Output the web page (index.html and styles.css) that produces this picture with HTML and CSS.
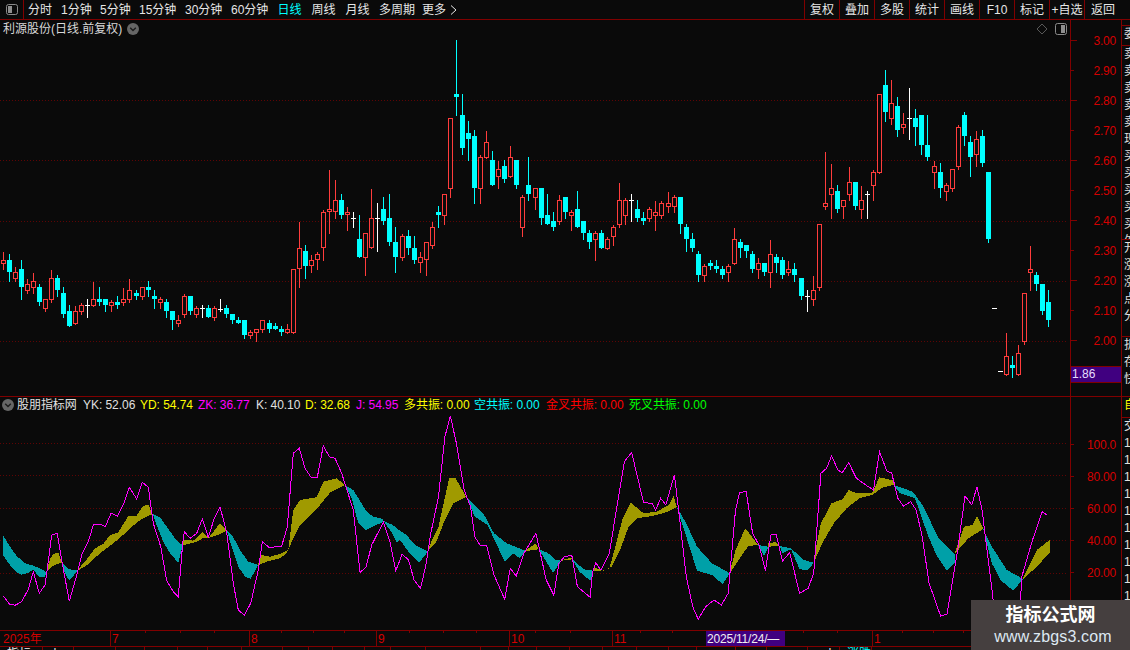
FILE: index.html
```html
<!DOCTYPE html>
<html lang="zh-CN">
<head>
<meta charset="utf-8">
<title>利源股份 日线</title>
<link rel="stylesheet" href="styles.css">
</head>
<body>
<div class="app">
  <header class="toolbar">
    <div class="toggle">
      <svg class="icon-toggle" width="12" height="11" viewBox="0 0 12 11"><rect x="0.5" y="0.5" width="11" height="10" rx="2" class="tg-frame"/><rect x="2" y="2" width="4" height="7" class="tg-bar"/></svg>
    </div>
    <nav class="periods">
      <span class="p w24">分时</span>
      <span class="p w30">1分钟</span>
      <span class="p w30">5分钟</span>
      <span class="p w37">15分钟</span>
      <span class="p w37">30分钟</span>
      <span class="p w37">60分钟</span>
      <span class="p w25 active">日线</span>
      <span class="p w25">周线</span>
      <span class="p w25">月线</span>
      <span class="p w36">多周期</span>
      <span class="p more">更多<svg class="more-arrow" width="7" height="10" viewBox="0 0 7 10"><polyline points="1,0.5 6,5 1,9.5"/></svg></span>
    </nav>
    <nav class="actions">
      <span class="b">复权</span>
      <span class="b">叠加</span>
      <span class="b">多股</span>
      <span class="b">统计</span>
      <span class="b">画线</span>
      <span class="b">F10</span>
      <span class="b">标记</span>
      <span class="b">+自选</span>
      <span class="b last">返回</span>
    </nav>
  </header>

  <div class="workspace">
    <main class="charts">
      <section class="pane price-pane">
        <div class="plot">
          <svg id="price" class="chart" width="1070" height="376" viewBox="0 20 1070 376">
            <line class="grid" x1="0" x2="1067" y1="100.5" y2="100.5"/>
            <line class="grid" x1="0" x2="1067" y1="160.5" y2="160.5"/>
            <line class="grid" x1="0" x2="1067" y1="221.5" y2="221.5"/>
            <line class="grid" x1="0" x2="1067" y1="281.5" y2="281.5"/>
            <line class="grid" x1="0" x2="1067" y1="341.5" y2="341.5"/>
          </svg>
          <div class="plot-head">
            <span class="stock">利源股份(日线.前复权)</span>
            <svg class="chev" width="12" height="12" viewBox="0 0 12 12"><circle cx="6" cy="6" r="6" class="chev-bg"/><polyline points="3.2,4.8 6,7.6 8.8,4.8" class="chev-line"/></svg>
            <span class="head-right">
              <svg width="12" height="12" viewBox="0 0 12 12"><polygon points="6,1 11,6 6,11 1,6" class="diamond"/></svg>
              <svg width="13" height="12" viewBox="0 0 13 12"><rect x="0.5" y="0.5" width="11" height="11" rx="2" class="tg-frame"/><rect x="6" y="2" width="4" height="8" class="tg-bar"/></svg>
            </span>
          </div>
        </div>
        <div class="axis price-axis">
          <div class="row"><i class="tk long"></i><span>3.00</span></div>
          <div class="row"><i class="tk"></i><span>2.90</span></div>
          <div class="row"><i class="tk long"></i><span>2.80</span></div>
          <div class="row"><i class="tk"></i><span>2.70</span></div>
          <div class="row"><i class="tk long"></i><span>2.60</span></div>
          <div class="row"><i class="tk"></i><span>2.50</span></div>
          <div class="row"><i class="tk long"></i><span>2.40</span></div>
          <div class="row"><i class="tk"></i><span>2.30</span></div>
          <div class="row"><i class="tk long"></i><span>2.20</span></div>
          <div class="row"><i class="tk"></i><span>2.10</span></div>
          <div class="row"><i class="tk long"></i><span>2.00</span></div>
          <div class="last-price">1.86</div>
        </div>
      </section>

      <section class="pane ind-pane">
        <div class="plot">
          <svg id="ind" class="chart" width="1070" height="233" viewBox="0 397 1070 233">
            <line class="grid" x1="0" x2="1067" y1="443.5" y2="443.5"/>
            <line class="grid" x1="0" x2="1067" y1="475.5" y2="475.5"/>
            <line class="grid" x1="0" x2="1067" y1="508.5" y2="508.5"/>
            <line class="grid" x1="0" x2="1067" y1="540.5" y2="540.5"/>
            <line class="grid" x1="0" x2="1067" y1="573.5" y2="573.5"/>
          </svg>
          <div class="ind-head">
            <svg class="chev2" width="12" height="12" viewBox="0 0 12 12"><circle cx="6" cy="6" r="6" class="chev-bg"/><polyline points="3.2,4.8 6,7.6 8.8,4.8" class="chev-line"/></svg>
            <span class="v w66 white">股朋指标网</span>
            <span class="v w57 white">YK: 52.06</span>
            <span class="v w58 yellow">YD: 54.74</span>
            <span class="v w58 magenta">ZK: 36.77</span>
            <span class="v w49 white">K: 40.10</span>
            <span class="v w51 yellow">D: 32.68</span>
            <span class="v w48 magenta">J: 54.95</span>
            <span class="v w70 yellow">多共振: 0.00</span>
            <span class="v w72 cyan">空共振: 0.00</span>
            <span class="v w83 red">金叉共振: 0.00</span>
            <span class="v w80 green">死叉共振: 0.00</span>
          </div>
        </div>
        <div class="axis ind-axis">
          <div class="row2"><i class="tk"></i><span>100.0</span></div>
          <div class="row2"><i class="tk"></i><span>80.00</span></div>
          <div class="row2"><i class="tk"></i><span>60.00</span></div>
          <div class="row2"><i class="tk"></i><span>40.00</span></div>
          <div class="row2"><i class="tk"></i><span>20.00</span></div>
        </div>
      </section>

      <svg class="date-axis" width="1121" height="19" viewBox="0 631 1121 19">
        <path class="dline" d="M110.5 631v15M249.5 631v15M376.5 631v15M509.5 631v15M612.5 631v15M872.5 631v15M145.5 631v2M180.5 631v2M214.5 631v2M281.5 631v2M313.5 631v2M344.5 631v2M409.5 631v2M443.5 631v2M476.5 631v2M535.5 631v2M570.5 631v2M640.5 631v2M672.5 631v2M803.5 631v2M837.5 631v2M902.5 631v2M933.5 631v2M963.5 631v2M0 646.5H1121M42.5 647v3M73.5 647v3M115.5 647v3M144.5 647v3M177.5 647v3M207.5 647v3M241.5 647v3M282.5 647v3M308.5 647v3M332.5 647v3M364.5 647v3M390.5 647v3M425.5 647v3M480.5 647v3M508.5 647v3M536.5 647v3M569.5 647v3M602.5 647v3M636.5 647v3M668.5 647v3M696.5 647v3M735.5 647v3M766.5 647v3M807.5 647v3M839.5 647v3M871.5 647v3"/>
        <rect class="dmark" x="706" y="631" width="79" height="15"/>
        <text class="dtxt" x="3" y="643">2025年</text>
        <text class="dtxt" x="112" y="643">7</text>
        <text class="dtxt" x="251" y="643">8</text>
        <text class="dtxt" x="378" y="643">9</text>
        <text class="dtxt" x="511" y="643">10</text>
        <text class="dtxt" x="614" y="643">11</text>
        <text class="dtxt" x="874" y="643">1</text>
        <text class="dmark-txt" x="707" y="643">2025/11/24/—</text>
        <text class="tab-w" x="7" y="658">指标</text>
        <text class="tab-w" x="50" y="658">卜</text>
        <text class="tab-w" x="825" y="658">卜</text>
        <text class="tab-c" x="847" y="658">涨跌</text>
      </svg>
    </main>

    <aside class="side">
      <div class="cell c0"></div>
      <div class="cell c1"><span>委</span></div>
      <div class="cell c2"><span>卖卖卖卖卖现买买买买买外</span></div>
      <div class="cell c3"><span>开涨涨点分</span></div>
      <div class="cell c4"><span>折存快</span></div>
      <div class="cell c5 yellow"><span>自</span></div>
      <div class="cell c6"><span>交1111111111</span></div>
    </aside>
  </div>

  <div class="watermark">
    <div class="wm-title">指标公式网</div>
    <div class="wm-url">www.zbgs3.com</div>
  </div>
</div>
<script src="chart.js"></script>
</body>
</html>
```

FILE: styles.css
```css
* { box-sizing: border-box; }
html, body { margin: 0; padding: 0; background: #0a0a0a; }
body { font-family: "Liberation Sans", "Noto Sans CJK SC", sans-serif; font-size: 12px; color: #e6e6e6; }
.app { position: relative; width: 1130px; height: 650px; overflow: hidden; background: #0a0a0a; display: flex; flex-direction: column; }

.toolbar { flex: none; height: 20px; display: flex; align-items: stretch; border-bottom: 1px solid #800000; }
.toggle { width: 24px; border-right: 1px solid #800000; display: flex; align-items: center; justify-content: center; }
.icon-toggle { display: block; }
.periods { display: flex; gap: 9px; padding-left: 4px; height: 19px; }
.p { height: 19px; padding-top: 1px; line-height: 18px; text-align: center; white-space: nowrap; color: #e6e6e6; }
.p.active { color: #00ffff; }
.w24 { width: 24px; } .w25 { width: 25px; } .w30 { width: 30px; } .w36 { width: 36px; } .w37 { width: 37px; }
.more { display: flex; align-items: center; gap: 4px; margin-left: -2px; }
.more-arrow { flex: none; }
.more-arrow polyline { fill: none; stroke: #e6e6e6; stroke-width: 1; }
.actions { margin-left: auto; display: flex; padding-right: 9px; height: 19px; }
.b { width: 35px; height: 19px; padding-top: 1px; line-height: 18px; border-left: 1px solid #800000; text-align: center; white-space: nowrap; }
.b.last { width: 37px; }

.workspace { flex: none; height: 630px; display: flex; }
.charts { width: 1121px; display: flex; flex-direction: column; }
.pane { flex: none; display: flex; border-bottom: 1px solid #800000; }
.price-pane { height: 377px; }
.ind-pane { height: 234px; }
.plot { position: relative; width: 1070px; }
.chart { display: block; shape-rendering: crispEdges; }
.grid { stroke: #5e0404; stroke-width: 1; stroke-dasharray: 1 2; }

.plot-head { position: absolute; top: 0; left: 0; right: 0; height: 18px; display: flex; align-items: center; padding: 0 2px 0 3px; color: #d8d8d8; }
.stock { line-height: 18px; }
.chev { margin-left: 5px; }
.chev-bg { fill: #666; }
.chev-line { fill: none; stroke: #1c1c1c; stroke-width: 1.4; }
.head-right { margin-left: auto; display: flex; gap: 7px; align-items: center; }
.diamond { fill: none; stroke: #585858; }
.tg-frame { fill: #0a0a0a; stroke: #8a8a8a; }
.tg-bar { fill: #8f8f8f; }

.axis { position: relative; flex: 1; border-left: 1px solid #800000; color: #d40000; }
.price-axis { padding-top: 5px; }
.row { height: 30.08px; display: flex; align-items: center; }
.tk { display: block; width: 3px; height: 1px; background: #800000; flex: none; }
.tk.long { width: 6px; }
.row span, .row2 span { margin-left: auto; padding: 1px 5px 0 0; letter-spacing: -0.2px; }
.ind-axis { padding-top: 31px; }
.row2 { height: 32.2px; display: flex; align-items: center; }
.last-price { position: absolute; left: 0; right: 0; top: 346px; height: 17px; line-height: 15px; padding-left: 1px; background: #400080; border-top: 1px solid #800000; border-bottom: 1px solid #800000; color: #e4dcff; }

.ind-head { position: absolute; left: 0; top: 0; height: 16px; display: flex; align-items: center; padding-left: 2px; white-space: nowrap; }
.chev2 { margin-right: 3px; flex: none; }
.v { flex: none; line-height: 16px; font-size: 12px; letter-spacing: -0.05px; }
.w66 { width: 66px; } .w57 { width: 57px; } .w58 { width: 58px; } .w49 { width: 49px; } .w51 { width: 51px; } .w48 { width: 48px; } .w70 { width: 70px; } .w72 { width: 72px; } .w83 { width: 83px; } .w80 { width: 80px; }
.white { color: #e0e0e0; } .yellow { color: #ffff00; } .magenta { color: #ff00ff; } .cyan { color: #00ffff; } .red { color: #ff0000; } .green { color: #00ff00; }

.date-axis { display: block; flex: none; shape-rendering: crispEdges; }
.dline { stroke: #800000; fill: none; stroke-width: 1; }
.dmark { fill: #400080; }
.dtxt { fill: #d40000; font-size: 12px; }
.dmark-txt { fill: #f0f0f0; font-size: 12px; letter-spacing: -0.2px; }
.tab-w { fill: #f0f0f0; font-size: 12px; }
.tab-c { fill: #00ffff; font-size: 12px; }

.side { flex: 1; border-left: 1px solid #800000; display: flex; flex-direction: column; overflow: hidden; }
.cell { overflow: hidden; padding-left: 2px; border-bottom: 1px solid #800000; flex: none; line-height: 17px; color: #e0e0e0; }
.cell span { display: block; width: 12px; word-break: break-all; }
.c0 { height: 6px; }
.c1 { height: 20px; line-height: 17px; }
.c2 { height: 194px; }
.c3 { height: 97px; }
.c4 { height: 60px; }
.c5 { height: 21px; color: #ffff00; }
.c6 { flex: 1; border-bottom: 0; }

.watermark { position: absolute; right: 0; bottom: 0; width: 159px; height: 50px; background: #453f3f; text-align: center; }
.wm-title { font-size: 18px; font-weight: 700; color: #fff; line-height: 24px; margin-top: 3px; }
.wm-url { font-size: 16px; color: #dde8f2; line-height: 19px; padding-left: 5px; letter-spacing: 0.15px; }
```

FILE: chart.js
```js
// Candles: type hi top bottom lo, in y values measured from a section offset (1/3 px units)
var sections = [
 [240, "r 36 60 72 87,c 42 60 96 123,r 82 96 117 124,c 60 87 141 177,r 117 132 153 159,r 99 123 144 159,c 132 141 186 195,r 177 177 207 213,r 90 114 180 186,c 105 114 150 168,c 141 159 222 231,c 195 213 258 258,r 198 213 252 252,r 189 195 216 222,w 177 196 196 231,r 126 177 198 198,c 141 177 187 195,c 177 177 195 213,r 180 186 198 213,c 168 186 195 204,r 144 177 189 195,r 117 150 180 186,c 150 159 168 177,r 141 141 171 177,c 123 141 150 168,c 150 168 177 204,r 171 177 189 204,c 177 186 213 231,c 213 213 240 267,r 225 240 252 258,r 162 168 225 231,c 168 168 213 222,r 198 204 225 231,w 195 204 204 231,c 195 204 231 231,r 198 204 234 240,w 177 207 207 213,c 195 204 222 231,c 222 222 240 249,c 231 240 249 249,c 240 240 285 294,r 270 276 288 294,r 267 267 279 303,r 240 240 270 276,c 240 249 267 276,c 249 258 267 267,c 258 267 276 285,r 252 267 279 279,r 88 88 279 279"],
 [30, "r 576 655 718 770,c 645 664 708 744,r 675 691 709 726,r 667 673 691 717,r 540 547 655 690,r 420 538 547 609,r 450 511 547 564,c 492 511 555 564,r 531 547 556 600,w 546 565 565 591,c 555 628 681 681,r 610 610 683 735,r 477 565 655 655,w 519 565 565 663,c 501 537 573 582,c 492 564 636 645,c 591 636 681 726,r 613 619 683 690,c 600 618 654 672,c 618 654 690 699,r 667 682 700 726,r 637 637 691 735,r 576 592 647 653,c 528 546 555 591,r 493 493 557 582,r 265 265 476 501,c 30 192 201 255,c 192 255 354 372,c 273 309 327 390,c 300 318 474 519,r 376 382 476 519,r 303 337 383 383,c 363 390 465 465,r 393 418 440 474,c 390 408 447 456,r 348 382 440 440,c 390 390 465 474,r 495 502 593 618,c 381 465 492 510,r 475 475 503 537"],
 [160, "c 84 84 174 192,c 102 165 192 192,c 156 183 201 210,r 105 121 185 192,c 111 111 156 174,r 150 156 167 210,c 93 147 201 201,c 183 183 219 237,c 210 219 246 264,r 213 220 239 300,c 210 219 264 264,r 232 238 266 266,r 195 202 230 255,r 69 121 194 201,r 114 121 167 192,w 102 121 121 183,c 120 147 174 183,c 156 174 183 192,r 141 148 176 183,r 123 157 167 210,r 123 130 167 174,r 96 130 140 156,r 105 112 140 156,c 111 111 192 219,c 192 201 237 273,c 219 237 264 273,c 273 282 345 363,r 312 319 347 363,c 300 309 318 327,c 300 318 327 336,c 318 327 345 354,r 312 319 338 363,r 204 238 311 311,c 237 246 264 291,c 255 255 273 291,c 273 282 327 336,r 294 310 329 354,c 309 309 336 345,r 240 283 338 381,c 282 291 309 336,c 291 300 345 354,r 303 328 338 345,c 309 327 345 363,c 354 354 408 417,w 390 409 409 453,r 348 391 419 435,r 193 193 383 390"],
 [60, "r 276 430 440 447,r 312 385 404 474,c 375 393 447 456,r 421 421 440 474,r 321 367 404 420,c 366 366 438 447,r 378 421 449 474,w 393 403 403 474,r 330 337 377 420,r 103 103 338 338,c 30 75 156 183,r 60 130 176 192,c 111 138 210 228,r 159 193 203 219,w 84 175 175 237,c 147 174 201 255,c 165 165 255 282,c 165 255 291 300,r 303 319 338 384,c 309 336 384 411,r 369 376 395 420,r 328 328 386 393,r 195 202 320 327,c 156 165 228 255,c 228 246 291 348,r 213 238 284 318,c 210 228 309 318,c 336 336 537 546"],
 [230, "w 235 235 235 235,w 424 424 424 424,r 310 379 434 434,c 378 405 414 441,r 345 370 434 434,r 190 190 335 342,r 48 118 128 180,c 126 135 162 180,c 162 162 243 252,c 180 216 270 288"]
];

var NS = "http://www.w3.org/2000/svg";
function el(name, attrs, parent) {
  var e = document.createElementNS(NS, name);
  for (var k in attrs) e.setAttribute(k, attrs[k]);
  parent.appendChild(e);
  return e;
}

var priceSvg = document.getElementById("price");
var COLORS = { r: "#ff3c3c", c: "#00ffff", w: "#ffffff" };
var idx = 0;
sections.forEach(function (sec) {
  var off = sec[0];
  sec[1].split(",").forEach(function (s) {
    var p = s.split(" ");
    var t = p[0];
    var yy = p.slice(1).map(function (v) { return Math.round(off + Number(v) / 3); });
    var hi = yy[0], top = yy[1], bot = yy[2], lo = yy[3];
    var x = 3 + 6 * idx + Math.floor(idx / 22);
    var col = COLORS[t];
    if (lo > hi) el("rect", { x: x, y: hi, width: 1, height: lo - hi + 1, fill: col }, priceSvg);
    if (t === "w") {
      el("rect", { x: x - 2, y: top, width: 5, height: 1, fill: col }, priceSvg);
    } else if (t === "c") {
      el("rect", { x: x - 2, y: top, width: 5, height: Math.max(bot - top, 1), fill: col }, priceSvg);
    } else {
      el("rect", { x: x - 2, y: top, width: 5, height: Math.max(bot - top, 1), fill: "#0a0a0a" }, priceSvg);
      el("rect", { x: x - 1.5, y: top + 0.5, width: 4, height: Math.max(bot - top - 1, 1), fill: "none", stroke: col, "stroke-width": 1 }, priceSvg);
    }
    idx++;
  });
});

// Indicator ribbon. a = points read at 3x from x=0, b = points read at 2.34x from x=400
function pa(s) {
  return s.split(" ").map(function (q) { var c = q.split(","); return [Number(c[0]) / 3, 410 + Number(c[1]) / 3]; });
}
function pb(s) {
  return s.split(" ").map(function (q) { var c = q.split(","); return [400 + Number(c[0]) / 2.34, 410 + Number(c[1]) / 3]; });
}
var TEAL = "#00a0a8", OLIVE = "#a09a00";
var bands = [
 [TEAL, pa, "9,376 30,410 50,438 75,460 100,467 120,475 140,487", "9,436 30,465 50,487 65,494 85,488 100,478 118,502 135,500 140,487"],
 [OLIVE, pa, "140,480 150,448 160,432 175,427 185,458", "140,485 155,470 170,462 185,458"],
 [TEAL, pa, "185,458 208,478 233,482", "185,458 195,490 208,512 233,482"],
 [OLIVE, pa, "233,480 260,448 285,415 310,402 330,375 355,367 385,318 410,317 430,287 445,285 458,312", "233,482 260,466 300,430 340,400 375,370 395,350 425,327 458,312"],
 [TEAL, pa, "458,312 480,322 500,350 530,392 548,406", "458,312 470,345 490,395 510,430 535,458 548,406"],
 [OLIVE, pa, "548,388 580,392 607,366 627,384", "548,406 590,395 610,384 627,384"],
 [OLIVE, pa, "627,382 660,340 680,362", "627,384 660,372 680,362"],
 [TEAL, pa, "680,362 700,382 720,420 745,455 775,465", "680,362 695,410 715,470 735,500 752,506 775,465"],
 [OLIVE, pa, "775,462 785,435 810,440 840,432 865,420 880,300 900,270 950,262 970,215 1010,205 1035,225", "775,465 800,455 840,445 860,430 880,385 900,345 930,315 960,285 990,248 1035,225"],
 [TEAL, pa, "1035,225 1060,240 1100,305 1120,320 1150,327", "1035,225 1055,265 1075,340 1098,360 1150,335"],
 [TEAL, pb, "-39,332 -17,345 0,362 15,375 35,405 65,425", "-39,332 -17,372 -8,397 0,390 20,425 45,458 65,425"],
 [OLIVE, pb, "65,418 90,350 115,205 130,205 155,260", "65,422 85,395 105,330 125,280 155,260"],
 [TEAL, pb, "155,260 195,310 220,370 250,400 295,423", "155,260 175,320 205,345 245,455 265,430 280,445 295,423"],
 [OLIVE, pb, "295,420 318,400 325,418", "295,423 325,418"],
 [TEAL, pb, "325,418 345,428 365,450 378,452", "325,418 358,488 378,452"],
 [OLIVE, pb, "378,450 400,443 403,448", "378,452 403,448"],
 [TEAL, pb, "403,448 430,478 453,482", "403,448 420,485 445,512 453,482"],
 [OLIVE, pb, "453,472 470,480", "453,484 470,484"],
 [OLIVE, pb, "475,482 490,475 505,405 520,330 540,278 570,310 600,305 630,285 640,258 648,292", "475,483 495,470 515,420 535,350 555,325 590,318 620,308 648,292"],
 [TEAL, pb, "648,292 670,340 695,410 730,460 772,490", "648,292 670,380 695,482 730,495 755,522 772,490"],
 [OLIVE, pb, "772,485 785,420 808,355 838,405", "772,490 800,435 815,408 838,405"],
 [TEAL, pb, "838,405 862,410", "838,405 852,438 862,410"],
 [OLIVE, pb, "862,400 878,396 888,408", "862,410 888,408"],
 [TEAL, pb, "888,408 915,415 945,450 968,458", "888,408 895,430 915,418 935,478 955,480 968,458"],
 [OLIVE, pb, "968,448 985,340 1010,280 1035,268 1050,240 1065,248 1105,248 1122,202 1155,212 1155,225", "968,458 990,395 1015,340 1045,295 1075,265 1105,255 1130,232 1155,225"],
 [TEAL, pb, "1155,225 1200,245 1225,290 1260,385 1298,432", "1155,225 1170,250 1205,265 1235,375 1255,435 1280,482 1298,460 1298,432"],
 [OLIVE, pb, "1298,430 1320,350 1340,345 1350,318 1365,357", "1298,432 1330,385 1365,357"],
 [TEAL, pb, "1365,357 1385,410 1420,480 1458,507", "1365,357 1385,460 1405,510 1435,542 1458,507"],
 [OLIVE, pb, "1458,505 1490,420 1520,390", "1458,507 1490,470 1520,428"]
];
var indSvg = document.getElementById("ind");
function fmt(pts) { return pts.map(function (q) { return q[0].toFixed(1) + "," + q[1].toFixed(1); }).join(" "); }
bands.forEach(function (b) {
  var top = b[1](b[2]), bot = b[1](b[3]);
  el("polygon", { points: fmt(top.concat(bot.reverse())), fill: b[0] }, indSvg);
});
var lineA = pa("10,558 28,582 45,586 65,575 85,538 100,485 118,550 135,525 140,490 155,375 172,370 185,450 208,574 232,490 245,435 265,395 280,345 300,342 316,350 333,310 352,318 372,280 388,232 410,267 427,217 445,232 460,340 482,410 500,512 520,545 535,560 548,400 553,365 570,385 590,370 607,327 625,382 643,325 660,290 680,368 700,520 715,600 733,616 752,580 775,480 787,395 808,413 845,408 862,350 880,130 898,115 915,175 933,202 952,202 970,107 988,140 1005,145 1025,190 1060,300 1080,487 1098,472 1115,405 1150,337 1170,395 1187,482 1200,450");
var lineB = pb("5,432 20,450 33,510 48,535 60,470 72,370 90,260 105,80 118,18 132,100 150,240 165,290 175,380 187,405 203,407 220,495 245,568 258,475 272,498 290,430 318,370 342,510 360,555 372,460 385,440 402,436 415,530 445,562 450,490 458,458 470,480 490,430 505,310 525,155 542,127 570,278 590,280 598,300 610,265 622,285 642,195 652,300 670,500 685,590 698,628 715,590 735,570 752,585 768,550 785,300 795,247 810,245 825,370 840,405 855,482 868,375 880,373 895,453 912,428 935,550 955,535 968,490 985,190 998,175 1010,138 1025,180 1035,188 1050,158 1068,205 1090,225 1108,240 1122,125 1140,185 1150,187 1165,265 1178,288 1195,275 1208,300 1222,380 1238,520 1265,618 1280,612 1305,420 1322,258 1338,285 1350,230 1362,300 1388,570 1400,640 1440,640 1452,570 1455,500 1480,390 1503,305 1515,316");
el("polyline", { points: fmt(lineA.concat(lineB)), fill: "none", stroke: "#ff00ff", "stroke-width": 1 }, indSvg);
```
